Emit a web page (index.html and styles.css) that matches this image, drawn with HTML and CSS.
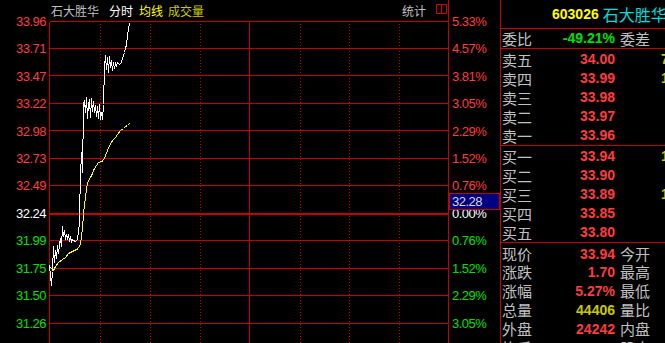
FILE: index.html
```html
<!DOCTYPE html>
<html lang="zh-CN">
<head>
  <meta charset="UTF-8" />
  <title>石大胜华 分时</title>
  <link rel="stylesheet" href="styles.css">
</head>
<body>
  <div class="screen">
    <div class="axis axis-left">
      <div class="tick up">33.96</div>
      <div class="tick up">33.71</div>
      <div class="tick up">33.47</div>
      <div class="tick up">33.22</div>
      <div class="tick up">32.98</div>
      <div class="tick up">32.73</div>
      <div class="tick up">32.49</div>
      <div class="tick flat">32.24</div>
      <div class="tick down">31.99</div>
      <div class="tick down">31.75</div>
      <div class="tick down">31.50</div>
      <div class="tick down">31.26</div>
    </div>

    <div class="chart">
      <div class="chart-head">
        <span class="name">石大胜华</span>
        <span class="tab tab-active">分时</span>
        <span class="tab tab-avg">均线</span>
        <span class="tab tab-vol">成交量</span>
        <span class="stat">统计</span>
        <svg class="split-icon" width="11" height="10" viewBox="0 0 11 10">
          <rect x="0.5" y="0.5" width="10" height="9" fill="none" stroke="#d00000" />
          <line x1="5.5" y1="0" x2="5.5" y2="10" stroke="#d00000" />
        </svg>
      </div>
      <svg class="plot" width="399" height="322" viewBox="0 0 399 322">
        <g transform="translate(-48.5,-20.5)" shape-rendering="crispEdges">
          <g class="grid" stroke="#c40000" stroke-width="1">
            <line x1="49" y1="21" x2="49" y2="343" />
            <line x1="49" y1="21" x2="448" y2="21" />
            <line x1="49" y1="48" x2="448" y2="48" />
            <line x1="49" y1="75" x2="448" y2="75" />
            <line x1="49" y1="103" x2="448" y2="103" />
            <line x1="49" y1="130" x2="448" y2="130" />
            <line x1="49" y1="158" x2="448" y2="158" />
            <line x1="49" y1="185" x2="448" y2="185" />
            <line x1="49" y1="213.5" x2="448" y2="213.5" stroke-width="2" />
            <line x1="49" y1="240" x2="448" y2="240" />
            <line x1="49" y1="268" x2="448" y2="268" />
            <line x1="49" y1="295" x2="448" y2="295" />
            <line x1="49" y1="323" x2="448" y2="323" />
            <line x1="249" y1="21" x2="249" y2="343" />
          </g>
          <g class="grid-dots" stroke="#c40000" stroke-dasharray="1 2">
            <line x1="100" y1="23" x2="100" y2="343" />
            <line x1="150" y1="23" x2="150" y2="343" />
            <line x1="200" y1="23" x2="200" y2="343" />
            <line x1="300" y1="23" x2="300" y2="343" />
            <line x1="349" y1="23" x2="349" y2="343" />
            <line x1="399" y1="23" x2="399" y2="343" />
          </g>
          <polyline class="avg-line" fill="none" stroke="#ffff00"
            points="49,266 51,268 53,270 55,266 58,262 62,259 65,257 68,253 70,252 74,250 78,248 80,243 81,236 82,228 83,213 84,205 85,197 86,188 87,183 88,180 90,177 92,173 93,170 96,165 98,162 101,161 103,160 105,155 107,150 110,143 113,139 115,137 117,134 120,130 123,128 125,126 127,125 129,123" />
          <polyline class="price-line" fill="none" stroke="#ffffff"
            points="49,265 50,276 51,285 52,271 53,246 54,262 55,250 56,258 57,245 58,253 59,244 60,238 61,246 62,226 63,236 64,230 65,239 66,234 67,238 68,235 69,240 70,237 71,241 72,239 73,240 75,241 77,239 78,230 79,223 79,213 80,175 81,152 82,172 82,150 83,128 83,103 84,100 85,112 86,97 87,118 88,104 89,99 90,117 91,98 92,111 93,101 94,112 95,105 96,116 97,106 98,118 99,104 100,119 101,112 102,119 103,104 104,66 105,55 106,69 107,57 108,72 109,56 110,67 111,60 112,70 113,62 114,68 115,63 116,65 117,62 119,64 121,62 122,58 124,52 125,48 126,44 127,36 128,28 129,23" />
        </g>
      </svg>
    </div>

    <div class="axis axis-right">
      <div class="tick up">5.33%</div>
      <div class="tick up">4.57%</div>
      <div class="tick up">3.81%</div>
      <div class="tick up">3.05%</div>
      <div class="tick up">2.29%</div>
      <div class="tick up">1.52%</div>
      <div class="tick up">0.76%</div>
      <div class="tick flat">0.00%</div>
      <div class="tick down">0.76%</div>
      <div class="tick down">1.52%</div>
      <div class="tick down">2.29%</div>
      <div class="tick down">3.05%</div>
      <div class="cur-price">32.28</div>
    </div>

    <div class="quote">
      <div class="quote-head">
        <span class="code">603026</span>
        <span class="stock-name">石大胜华</span>
      </div>
      <div class="row ratio-row">
        <span class="label">委比</span>
        <span class="num down">-49.21%</span>
        <span class="label aux">委差</span>
      </div>
      <div class="book">
        <div class="row"><span class="label">卖五</span><span class="num up">34.00</span><span class="aux"></span><span class="vol">76</span></div>
        <div class="row"><span class="label">卖四</span><span class="num up">33.99</span><span class="aux"></span><span class="vol">12</span></div>
        <div class="row"><span class="label">卖三</span><span class="num up">33.98</span></div>
        <div class="row"><span class="label">卖二</span><span class="num up">33.97</span></div>
        <div class="row"><span class="label">卖一</span><span class="num up">33.96</span></div>
      </div>
      <div class="book">
        <div class="row"><span class="label">买一</span><span class="num up">33.94</span><span class="aux"></span><span class="vol">15</span></div>
        <div class="row"><span class="label">买二</span><span class="num up">33.90</span></div>
        <div class="row"><span class="label">买三</span><span class="num up">33.89</span><span class="aux"></span><span class="vol">10</span></div>
        <div class="row"><span class="label">买四</span><span class="num up">33.85</span></div>
        <div class="row"><span class="label">买五</span><span class="num up">33.80</span></div>
      </div>
      <div class="stats">
        <div class="row"><span class="label">现价</span><span class="num up">33.94</span><span class="label aux">今开</span></div>
        <div class="row"><span class="label">涨跌</span><span class="num up">1.70</span><span class="label aux">最高</span></div>
        <div class="row"><span class="label">涨幅</span><span class="num up">5.27%</span><span class="label aux">最低</span></div>
        <div class="row"><span class="label">总量</span><span class="num amount">44406</span><span class="label aux">量比</span></div>
        <div class="row"><span class="label">外盘</span><span class="num up">24242</span><span class="label aux">内盘</span></div>
        <div class="row"><span class="label">换手</span><span class="num up">3.11%</span><span class="label aux">股本</span></div>
      </div>
    </div>
  </div>
</body>
</html>
```

FILE: styles.css
```css
body {
  margin: 0;
  background: #000;
  font-family: "Liberation Sans", "Noto Sans CJK SC", sans-serif;
}

.screen {
  display: flex;
  width: 665px;
  height: 343px;
  overflow: hidden;
  background: #000;
}

/* price / percent scales */
.axis {
  flex: none;
  display: flex;
  flex-direction: column;
  box-sizing: border-box;
  height: 343px;
  padding-top: 7.8px;
  font-size: 13px;
  letter-spacing: -0.5px;
}

.tick {
  flex: none;
  height: 27.45px;
  line-height: 27.45px;
}

.axis-left {
  width: 49px;
  padding-left: 16px;
}

.axis-right {
  position: relative;
  width: 52px;
  padding-left: 3px;
  border-right: 1px solid #c40000;
}

.up { color: #ff3c3c; }
.flat { color: #ffffff; }
.down { color: #00e000; }

.cur-price {
  position: absolute;
  left: 0;
  top: 193px;
  width: 51px;
  height: 17px;
  box-sizing: border-box;
  padding-left: 2px;
  border: 1px solid #c40000;
  background: #000080;
  color: #d8d8d8;
  line-height: 15px;
}

/* intraday chart */
.chart {
  flex: none;
  width: 400px;
  box-sizing: border-box;
  border-right: 1px solid #c40000;
}

.chart-head {
  display: flex;
  align-items: center;
  height: 21px;
  padding: 0 1px 0 2px;
  font-family: "Noto Sans CJK SC", sans-serif;
  font-size: 12px;
  line-height: 21px;
  white-space: nowrap;
}

.name { color: #c0c0c0; margin-right: 10px; }
.tab-active { color: #ffffff; margin-right: 6px; }
.tab-avg { color: #ffff00; margin-right: 5px; }
.tab-vol { color: #c8c800; }

.stat {
  margin-left: auto;
  margin-right: 10px;
  color: #c0c0c0;
}

.split-icon {
  display: block;
  align-self: flex-start;
  margin-top: 4px;
}

.plot {
  display: block;
}

/* quote panel */
.quote {
  flex: none;
  width: 164px;
  overflow: hidden;
  white-space: nowrap;
}

.quote-head {
  display: flex;
  align-items: center;
  gap: 4px;
  height: 28px;
  padding-left: 51px;
  border-bottom: 1px solid #c40000;
}

.code {
  color: #ffff00;
  font-weight: bold;
  font-size: 14px;
}

.stock-name {
  color: #00dcdc;
  font-family: "Noto Sans CJK SC", sans-serif;
  font-size: 16px;
}

.row {
  display: grid;
  grid-template-columns: 50px 63px 46px auto;
  height: 19px;
  line-height: 19px;
  padding-left: 1px;
}

.ratio-row {
  border-bottom: 1px solid #c40000;
}

.book {
  padding-top: 1px;
  border-bottom: 1px solid #c40000;
}

.stats {
  padding-top: 1.6px;
}

.stats .row {
  height: 18.8px;
  line-height: 18.8px;
}

.label {
  color: #c0c0c0;
  font-family: "Noto Sans CJK SC", sans-serif;
  font-size: 15px;
}

.aux {
  padding-left: 5px;
}

.num {
  text-align: right;
  font-weight: bold;
  font-size: 14px;
}

.amount { color: #c8c800; }

.vol {
  color: #c8c800;
  font-weight: bold;
  font-size: 14px;
}
```
